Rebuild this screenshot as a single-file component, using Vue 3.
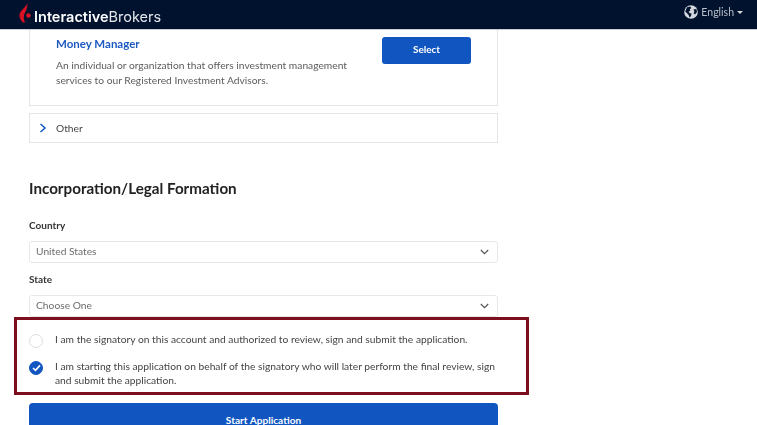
<script setup>
const options = [
  { id: 'a', checked: false, lines: 'I am the signatory on this account and authorized to review, sign and submit the application.' },
  { id: 'b', checked: true, lines: 'I am starting this application on behalf of the signatory who will later perform the final review, sign and submit the application.' }
]
</script>

<template>
  <div class="page">
    <header class="topbar">
      <div class="logo">
        <svg class="flame" width="14" height="24" viewBox="0 0 14 24">
          <path d="M8.5 1 C7.5 5 1.5 8 0.5 12.5 C0 15 1.5 18 4 20.5 L6 20.5 C5 18 4.5 16 5 13.5 C5.5 10.5 8.5 8 8.5 1 Z" fill="#d81222"/>
          <circle cx="9.5" cy="13.5" r="2.3" fill="#d81222"/>
        </svg>
        <span class="logo-text"><b>Interactive</b>Brokers</span>
      </div>
      <div class="lang">
        <svg width="14" height="14" viewBox="0 0 14 14">
          <circle cx="7" cy="7" r="6.8" fill="#d4d8de"/>
          <path d="M3 2.2 L6.3 1.5 L7.2 3 L5.8 4.2 L6.4 5.4 L4.6 6.8 L5.8 8.2 L7.6 8.6 L7 11 L5.6 12.4 L4.6 10 L2.8 8 L1.2 6.6 Z" fill="#00122e"/>
          <path d="M9.4 4.6 L12.4 4 L13 7 L11 9.6 L9.6 8.2 L10.4 6.4 Z" fill="#00122e"/>
        </svg>
        <span>English</span>
        <i class="caret"></i>
      </div>
    </header>

    <main class="content">
      <section class="card">
        <div class="card-copy">
          <h3>Money Manager</h3>
          <p>An individual or organization that offers investment management services to our Registered Investment Advisors.</p>
        </div>
        <button class="btn select-btn">Select</button>
      </section>

      <section class="other">
        <svg width="8" height="10" viewBox="0 0 8 10"><path d="M1.5 1 L6 5 L1.5 9" fill="none" stroke="#1256c4" stroke-width="1.5"/></svg>
        <span>Other</span>
      </section>

      <h2>Incorporation/Legal Formation</h2>

      <label class="field-label first">Country</label>
      <div class="select">
        <span>United States</span>
        <svg width="9" height="6" viewBox="0 0 9 6"><path d="M0.8 1 L4.5 4.6 L8.2 1" fill="none" stroke="#555" stroke-width="1.2"/></svg>
      </div>

      <label class="field-label">State</label>
      <div class="select">
        <span>Choose One</span>
        <svg width="9" height="6" viewBox="0 0 9 6"><path d="M0.8 1 L4.5 4.6 L8.2 1" fill="none" stroke="#555" stroke-width="1.2"/></svg>
      </div>

      <div class="signers">
        <div class="highlight"></div>
        <div v-for="o in options" :key="o.id" class="option">
          <span class="radio" :class="{ on: o.checked }">
            <svg v-if="o.checked" width="9" height="8" viewBox="0 0 9 8"><path d="M1 4 L3.5 6.3 L8 1.4" fill="none" stroke="#fff" stroke-width="1.6"/></svg>
          </span>
          <span class="option-text">{{ o.lines }}</span>
        </div>
      </div>

      <button class="btn start-btn">Start Application</button>
    </main>
  </div>
</template>

<style>
html, body { margin: 0; overflow: hidden; background: #fff; }
</style>

<style scoped>
.page {
  width: 757px;
  height: 425px;
  overflow: hidden;
  font-family: "Lato", "Liberation Sans", sans-serif;
  color: #444;
  font-size: 10.25px;
  filter: blur(0.3px);
}
.topbar {
  position: relative;
  height: 29px;
  box-shadow: 0 1px 0 #c9ccd1;
  background: #00122e;
  display: flex;
  justify-content: space-between;
  align-items: flex-start;
  padding: 0 14px 0 19px;
}
.logo { display: flex; align-items: flex-start; }
.flame { margin-top: 2px; }
.logo-text {
  color: #e6e8ec;
  font-size: 14.5px;
  line-height: 17px;
  margin: 8px 0 0 1px;
  font-family: "Inter", "Liberation Sans", sans-serif;
}
.logo-text b { font-weight: 600; color: #fff; }
.lang {
  display: flex;
  align-items: center;
  gap: 3px;
  color: #b9bfc8;
  font-size: 10.5px;
  height: 14px;
  margin-top: 5px;
}
.caret {
  width: 0;
  height: 0;
  border-left: 3px solid transparent;
  border-right: 3px solid transparent;
  border-top: 3px solid #d4d8de;
}
.content {
  width: 469px;
  margin-left: 29px;
  display: flex;
  flex-direction: column;
}
.card {
  height: 76px;
  border: 1px solid #e4e4e4;
  border-top: 0;
  display: flex;
  justify-content: space-between;
  align-items: flex-start;
  padding: 0 26px;
}
.card-copy { width: 300px; }
.card h3 {
  margin: 7px 0 0;
  color: #1d5ac0;
  font-size: 11.5px;
  line-height: 16px;
  font-weight: 700;
}
.card p {
  margin: 6px 0 0;
  line-height: 14.5px;
  color: #5c5c5c;
}
.btn {
  border: 0;
  border-radius: 3px;
  background: #1156c0;
  color: #fff;
  font-family: inherit;
  font-weight: 700;
  padding: 0;
}
.select-btn {
  width: 89px;
  height: 27px;
  margin-top: 8px;
  padding-bottom: 3px;
  font-size: 10px;
}
.other {
  box-sizing: border-box;
  height: 30px;
  margin-top: 7px;
  border: 1px solid #e4e4e4;
  display: flex;
  align-items: center;
  gap: 9px;
  padding-left: 9px;
  padding-bottom: 1px;
}
h2 {
  margin: 35px 0 0;
  font-size: 15.2px;
  line-height: 20px;
  font-weight: 700;
  color: #222;
}
.field-label {
  display: block;
  font-size: 10px;
  font-weight: 700;
  line-height: 14px;
  color: #333;
  margin-top: 9px;
}
.field-label.first { margin-top: 20px; }
.select {
  box-sizing: border-box;
  height: 22px;
  margin-top: 9px;
  border: 1px solid #e8e8e8;
  border-radius: 3px;
  display: flex;
  justify-content: space-between;
  align-items: center;
  padding: 0 8px 0 6px;
  color: #6c6c6c;
}
.select span { margin-bottom: 2px; }
.signers {
  position: relative;
  padding: 15px 0 8px;
}
.highlight {
  position: absolute;
  left: -15px;
  top: 0;
  width: 515px;
  height: 78px;
  box-sizing: border-box;
  border: 3px solid #7d0e1c;
  pointer-events: none;
}
.option {
  display: flex;
  gap: 12px;
  align-items: flex-start;
  margin-bottom: 11px;
}
.option:last-child { margin-bottom: 0; }
.radio {
  box-sizing: border-box;
  width: 14px;
  height: 14px;
  flex: none;
  border: 1px solid #ddd;
  border-radius: 50%;
  margin-top: 2px;
  display: flex;
  align-items: center;
  justify-content: center;
}
.radio.on { background: #1156c0; border-color: #1156c0; }
.option-text {
  width: 440px;
  line-height: 14px;
}
.start-btn {
  height: 34px;
  margin-top: 8px;
  flex: none;
  border-radius: 4px;
  font-size: 10.1px;
}
</style>
